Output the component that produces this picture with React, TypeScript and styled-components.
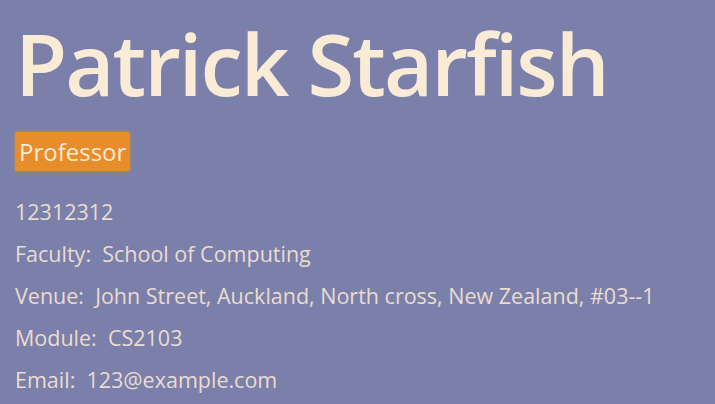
import React from "react";
import styled, { createGlobalStyle } from "styled-components";

const Global = createGlobalStyle`
  html, body { margin: 0; padding: 0; background: #7b80ab; }
  body { font-family: "Open Sans", "Noto Sans", sans-serif; }
`;

const Page = styled.div`
  width: 715px;
  height: 404px;
  overflow: hidden;
  background: #7b80ab;
  box-sizing: border-box;
  padding: 9px 15px 0 15px;
  display: flex;
  flex-direction: column;
  align-items: flex-start;
`;

const Name = styled.h1`
  margin: 0;
  font-family: "Open Sans", sans-serif;
  font-weight: 600;
  font-size: 85px;
  line-height: 108px;
  color: #faebd7;
  letter-spacing: -2px;
`;

const Badge = styled.span`
  margin-top: 15px;
  background: #e88d2a;
  color: #faebd7;
  font-size: 24px;
  line-height: 29px;
  padding: 5px 4px 5px 4px;
  border-radius: 2px;
  box-shadow: 0 0 4px rgba(232, 141, 42, 0.6);
`;

const Details = styled.div`
  margin-top: 26px;
  display: flex;
  flex-direction: column;
  gap: 12px;
`;

const Line = styled.div`
  font-size: 21.5px;
  line-height: 30px;
  color: #eadccf;
  white-space: pre;
`;

export default function App() {
  return (
    <>
      <Global />
      <Page>
        <Name>Patrick Starfish</Name>
        <Badge>Professor</Badge>
        <Details>
          <Line>12312312</Line>
          <Line>Faculty:  School of Computing</Line>
          <Line>Venue:  John Street, Auckland, North cross, New Zealand, #03--1</Line>
          <Line>Module:  CS2103</Line>
          <Line>Email:  123@example.com</Line>
        </Details>
      </Page>
    </>
  );
}
